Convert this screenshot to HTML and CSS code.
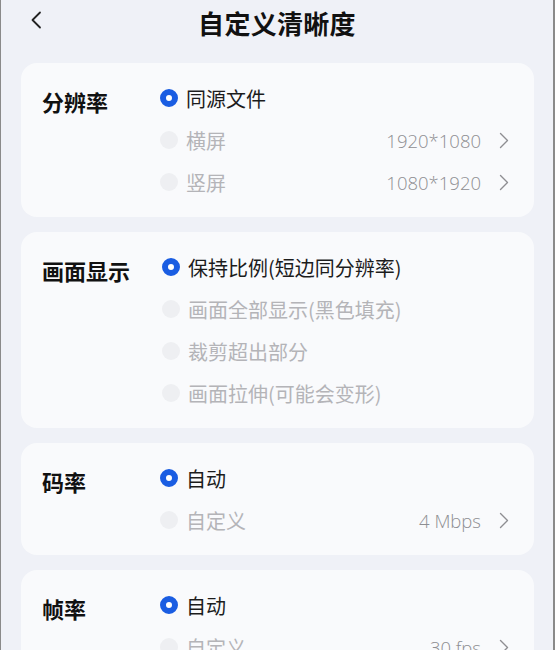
FILE: index.html
```html
<!DOCTYPE html>
<html lang="zh-CN">
<head>
    <meta charset="UTF-8">
    <meta name="viewport" content="width=device-width, initial-scale=1.0">
    <title>自定义清晰度</title>
    <link rel="stylesheet" href="styles.css">
</head>
<body>

    <header class="topbar">
        <svg class="back" width="12" height="18" viewBox="0 0 12 18">
            <path d="M10 1.5 L2.5 9 L10 16.5" fill="none" stroke="#222" stroke-width="1.8" stroke-linecap="round" stroke-linejoin="round"/>
        </svg>
        <h1>自定义清晰度</h1>
    </header>

    <section class="card">
        <div class="label">分辨率</div>
        <div class="options">
            <div class="option on"><span class="radio"></span><span class="text">同源文件</span></div>
            <div class="option"><span class="radio"></span><span class="text">横屏</span><span class="value">1920*1080</span><svg class="chev" width="10" height="17" viewBox="0 0 10 17"><path d="M1.5 1.5 L8.5 8.5 L1.5 15.5" fill="none" stroke="#8e8e92" stroke-width="1.4" stroke-linecap="round" stroke-linejoin="round"/></svg></div>
            <div class="option"><span class="radio"></span><span class="text">竖屏</span><span class="value">1080*1920</span><svg class="chev" width="10" height="17" viewBox="0 0 10 17"><path d="M1.5 1.5 L8.5 8.5 L1.5 15.5" fill="none" stroke="#8e8e92" stroke-width="1.4" stroke-linecap="round" stroke-linejoin="round"/></svg></div>
        </div>
    </section>

    <section class="card">
        <div class="label">画面显示</div>
        <div class="options">
            <div class="option on"><span class="radio"></span><span class="text">保持比例(短边同分辨率)</span></div>
            <div class="option"><span class="radio"></span><span class="text">画面全部显示(黑色填充)</span></div>
            <div class="option"><span class="radio"></span><span class="text">裁剪超出部分</span></div>
            <div class="option"><span class="radio"></span><span class="text">画面拉伸(可能会变形)</span></div>
        </div>
    </section>

    <section class="card">
        <div class="label">码率</div>
        <div class="options">
            <div class="option on"><span class="radio"></span><span class="text">自动</span></div>
            <div class="option"><span class="radio"></span><span class="text">自定义</span><span class="value">4 Mbps</span><svg class="chev" width="10" height="17" viewBox="0 0 10 17"><path d="M1.5 1.5 L8.5 8.5 L1.5 15.5" fill="none" stroke="#8e8e92" stroke-width="1.4" stroke-linecap="round" stroke-linejoin="round"/></svg></div>
        </div>
    </section>

    <section class="card">
        <div class="label">帧率</div>
        <div class="options">
            <div class="option on"><span class="radio"></span><span class="text">自动</span></div>
            <div class="option"><span class="radio"></span><span class="text">自定义</span><span class="value">30 fps</span><svg class="chev" width="10" height="17" viewBox="0 0 10 17"><path d="M1.5 1.5 L8.5 8.5 L1.5 15.5" fill="none" stroke="#8e8e92" stroke-width="1.4" stroke-linecap="round" stroke-linejoin="round"/></svg></div>
        </div>
    </section>

</body>
</html>
```

FILE: styles.css
```css
html, body {
    height: 100%;
}

body {
    margin: 0;
    background-color: #eff1f7;
    font-family: "Noto Sans CJK SC", "Noto Sans", sans-serif;
    color: #1a1a1a;
    border-left: 1px solid #8a8a8a;
    border-right: 2px solid #8a8a8a;
    box-sizing: border-box;
    overflow: hidden;
}

.topbar {
    position: relative;
    height: 44px;
    display: flex;
    align-items: center;
    justify-content: center;
    margin-bottom: 19px;
}

.topbar h1 {
    margin: 0;
    font-size: 26px;
    font-weight: 700;
    color: #111;
    letter-spacing: 0.3px;
}

.back {
    position: absolute;
    left: 29px;
    top: 11px;
}

.card {
    margin: 0 19px 15px 20px;
    background-color: #f9fafc;
    border-radius: 16px;
    padding: 14px 25px 14px 21px;
    display: flex;
    align-items: flex-start;
}

.label {
    min-width: 118px;
    padding-right: 32px;
    box-sizing: border-box;
    font-size: 22px;
    font-weight: 700;
    color: #111;
    line-height: 48px;
}

.options {
    flex: 1;
    display: flex;
    flex-direction: column;
}

.option {
    height: 42px;
    display: flex;
    align-items: center;
    font-size: 20px;
    color: #b4b4b8;
}

.option.on {
    color: #1c1c1c;
}

.radio {
    width: 18px;
    height: 18px;
    border-radius: 50%;
    background-color: #eeeff2;
    box-sizing: border-box;
    margin-right: 8px;
    flex-shrink: 0;
}

.option.on .radio {
    background-color: #fff;
    border: 6px solid #1a5de2;
}

.text {
    flex: 1;
}

.value {
    font-family: "Open Sans", "Noto Sans", sans-serif;
    font-weight: 300;
    font-size: 18.5px;
    color: #8e8e92;
    margin-right: 18px;
}

.chev {
    flex-shrink: 0;
}
```
